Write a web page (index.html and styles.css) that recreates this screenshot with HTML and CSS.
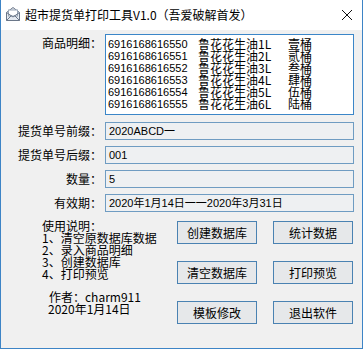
FILE: index.html
```html
<!DOCTYPE html>
<html lang="zh-CN">
  <head>
    <meta charset="utf-8">
    <title>超市提货单打印工具V1.0</title>
    <link rel="stylesheet" href="styles.css">
  </head>
  <body>

    <div class="window">

      <!-- Title bar -->
      <div class="titlebar">
        <svg class="app-icon" width="16" height="16" viewBox="0 0 16 16">
          <path d="M1.5 6.5 L8 1.5 L14.5 6.5 V14.5 H1.5 Z" fill="#e4e9f0" stroke="#6b7789"/>
          <rect x="3.5" y="4" width="9" height="6" fill="#ffffff" stroke="#9aa6b6"/>
          <path d="M1.5 6.5 L8 11 L14.5 6.5" fill="none" stroke="#6b7789"/>
          <path d="M1.5 14.5 L6.5 9.5 M14.5 14.5 L9.5 9.5" fill="none" stroke="#6b7789"/>
        </svg>
        <span class="title">超市提货单打印工具V1.0（吾爱破解首发）</span>
        <svg class="close" width="12" height="12" viewBox="0 0 12 12">
          <path d="M1 1 L11 11 M11 1 L1 11" stroke="#111" stroke-width="1"/>
        </svg>
      </div>

      <div class="content">

        <!-- Product list -->
        <div class="field field-list">
          <span class="label">商品明细：</span>
          <div class="listbox">
            <div class="item"><span class="code">6916168616550</span><span class="name">鲁花花生油1L</span><span class="qty">壹桶</span></div>
            <div class="item"><span class="code">6916168616551</span><span class="name">鲁花花生油2L</span><span class="qty">贰桶</span></div>
            <div class="item"><span class="code">6916168616552</span><span class="name">鲁花花生油3L</span><span class="qty">叁桶</span></div>
            <div class="item"><span class="code">6916168616553</span><span class="name">鲁花花生油4L</span><span class="qty">肆桶</span></div>
            <div class="item"><span class="code">6916168616554</span><span class="name">鲁花花生油5L</span><span class="qty">伍桶</span></div>
            <div class="item"><span class="code">6916168616555</span><span class="name">鲁花花生油6L</span><span class="qty">陆桶</span></div>
          </div>
        </div>

        <!-- Order fields -->
        <div class="field">
          <span class="label">提货单号前缀：</span>
          <div class="input">2020ABCD一</div>
        </div>
        <div class="field">
          <span class="label">提货单号后缀：</span>
          <div class="input">001</div>
        </div>
        <div class="field">
          <span class="label">数量：</span>
          <div class="input">5</div>
        </div>
        <div class="field">
          <span class="label">有效期：</span>
          <div class="input">2020年1月14日一一2020年3月31日</div>
        </div>

        <!-- Notes and actions -->
        <div class="bottom">
          <div class="notes">
            <p>使用说明：</p>
            <p>1、清空原数据库数据</p>
            <p>2、录入商品明细</p>
            <p>3、创建数据库</p>
            <p>4、打印预览</p>
            <p class="author">作者：charm911</p>
            <p class="date">2020年1月14日</p>
          </div>
          <div class="buttons">
            <button>创建数据库</button>
            <button>统计数据</button>
            <button>清空数据库</button>
            <button>打印预览</button>
            <button>模板修改</button>
            <button>退出软件</button>
          </div>
        </div>

      </div>
    </div>

  </body>
</html>
```

FILE: styles.css
```css
* {
  box-sizing: border-box;
}

body {
  margin: 0;
  font-family: "Noto Sans CJK SC", sans-serif;
  font-size: 12px;
  color: #000;
  background-color: #f0f0f0;
}

/* Window frame */
.window {
  width: 363px;
  height: 349px;
  border: 1px solid #3d84c6;
  border-top: none;
  background-color: #f0f0f0;
  display: flex;
  flex-direction: column;
}

.titlebar {
  height: 30px;
  background-color: #fff;
  display: flex;
  align-items: center;
  padding: 0 9px 0 4px;
}

.app-icon {
  flex: none;
  margin-right: 4px;
  margin-top: -2px;
}

.title {
  flex: 1;
  font-size: 12px;
  line-height: 16px;
}

.close {
  flex: none;
}

/* Form area */
.content {
  padding-top: 4px;
}

.field {
  display: flex;
  align-items: center;
  margin-bottom: 6px;
}

.field-list {
  align-items: flex-start;
  margin-bottom: 7px;
}

.label {
  width: 101px;
  margin-right: 3px;
  text-align: right;
  line-height: 18px;
  white-space: nowrap;
}

.listbox {
  width: 249px;
  height: 81px;
  border: 1px solid #3b86c8;
  background-color: #fff;
  padding: 3px 0 0 2px;
}

.item {
  display: flex;
  height: 12px;
  line-height: 12px;
}

.code {
  width: 90px;
  font-family: "Liberation Sans", sans-serif;
  font-size: 11px;
}

.name {
  width: 90px;
}

.qty {
  width: 40px;
}

.input {
  width: 249px;
  height: 18px;
  border: 1px solid #6f9cc2;
  background-color: #eef0f2;
  padding-left: 3px;
  line-height: 16px;
  font-size: 11px;
  font-family: "Liberation Sans", "Noto Sans CJK SC", sans-serif;
  white-space: nowrap;
}

/* Notes and buttons */
.bottom {
  display: flex;
  justify-content: space-between;
  margin-top: 8px;
  padding: 0 9px 0 41px;
}

.notes p {
  margin: 0;
  line-height: 12px;
  white-space: nowrap;
}

.notes .author {
  margin-top: 11px;
  padding-left: 7px;
}

.notes .date {
  padding-left: 6px;
}

.buttons {
  display: grid;
  grid-template-columns: 80px 80px;
  grid-auto-rows: 23px;
  column-gap: 16px;
  row-gap: 17px;
  margin-top: 1px;
}

.buttons button {
  font-family: "Noto Sans CJK SC", sans-serif;
  font-size: 12px;
  color: #000;
  background-color: #e6e8ea;
  border: 1px solid #4a82b2;
  padding: 0;
  cursor: pointer;
}

.buttons button:hover {
  background-color: #e5f1fb;
}
```
